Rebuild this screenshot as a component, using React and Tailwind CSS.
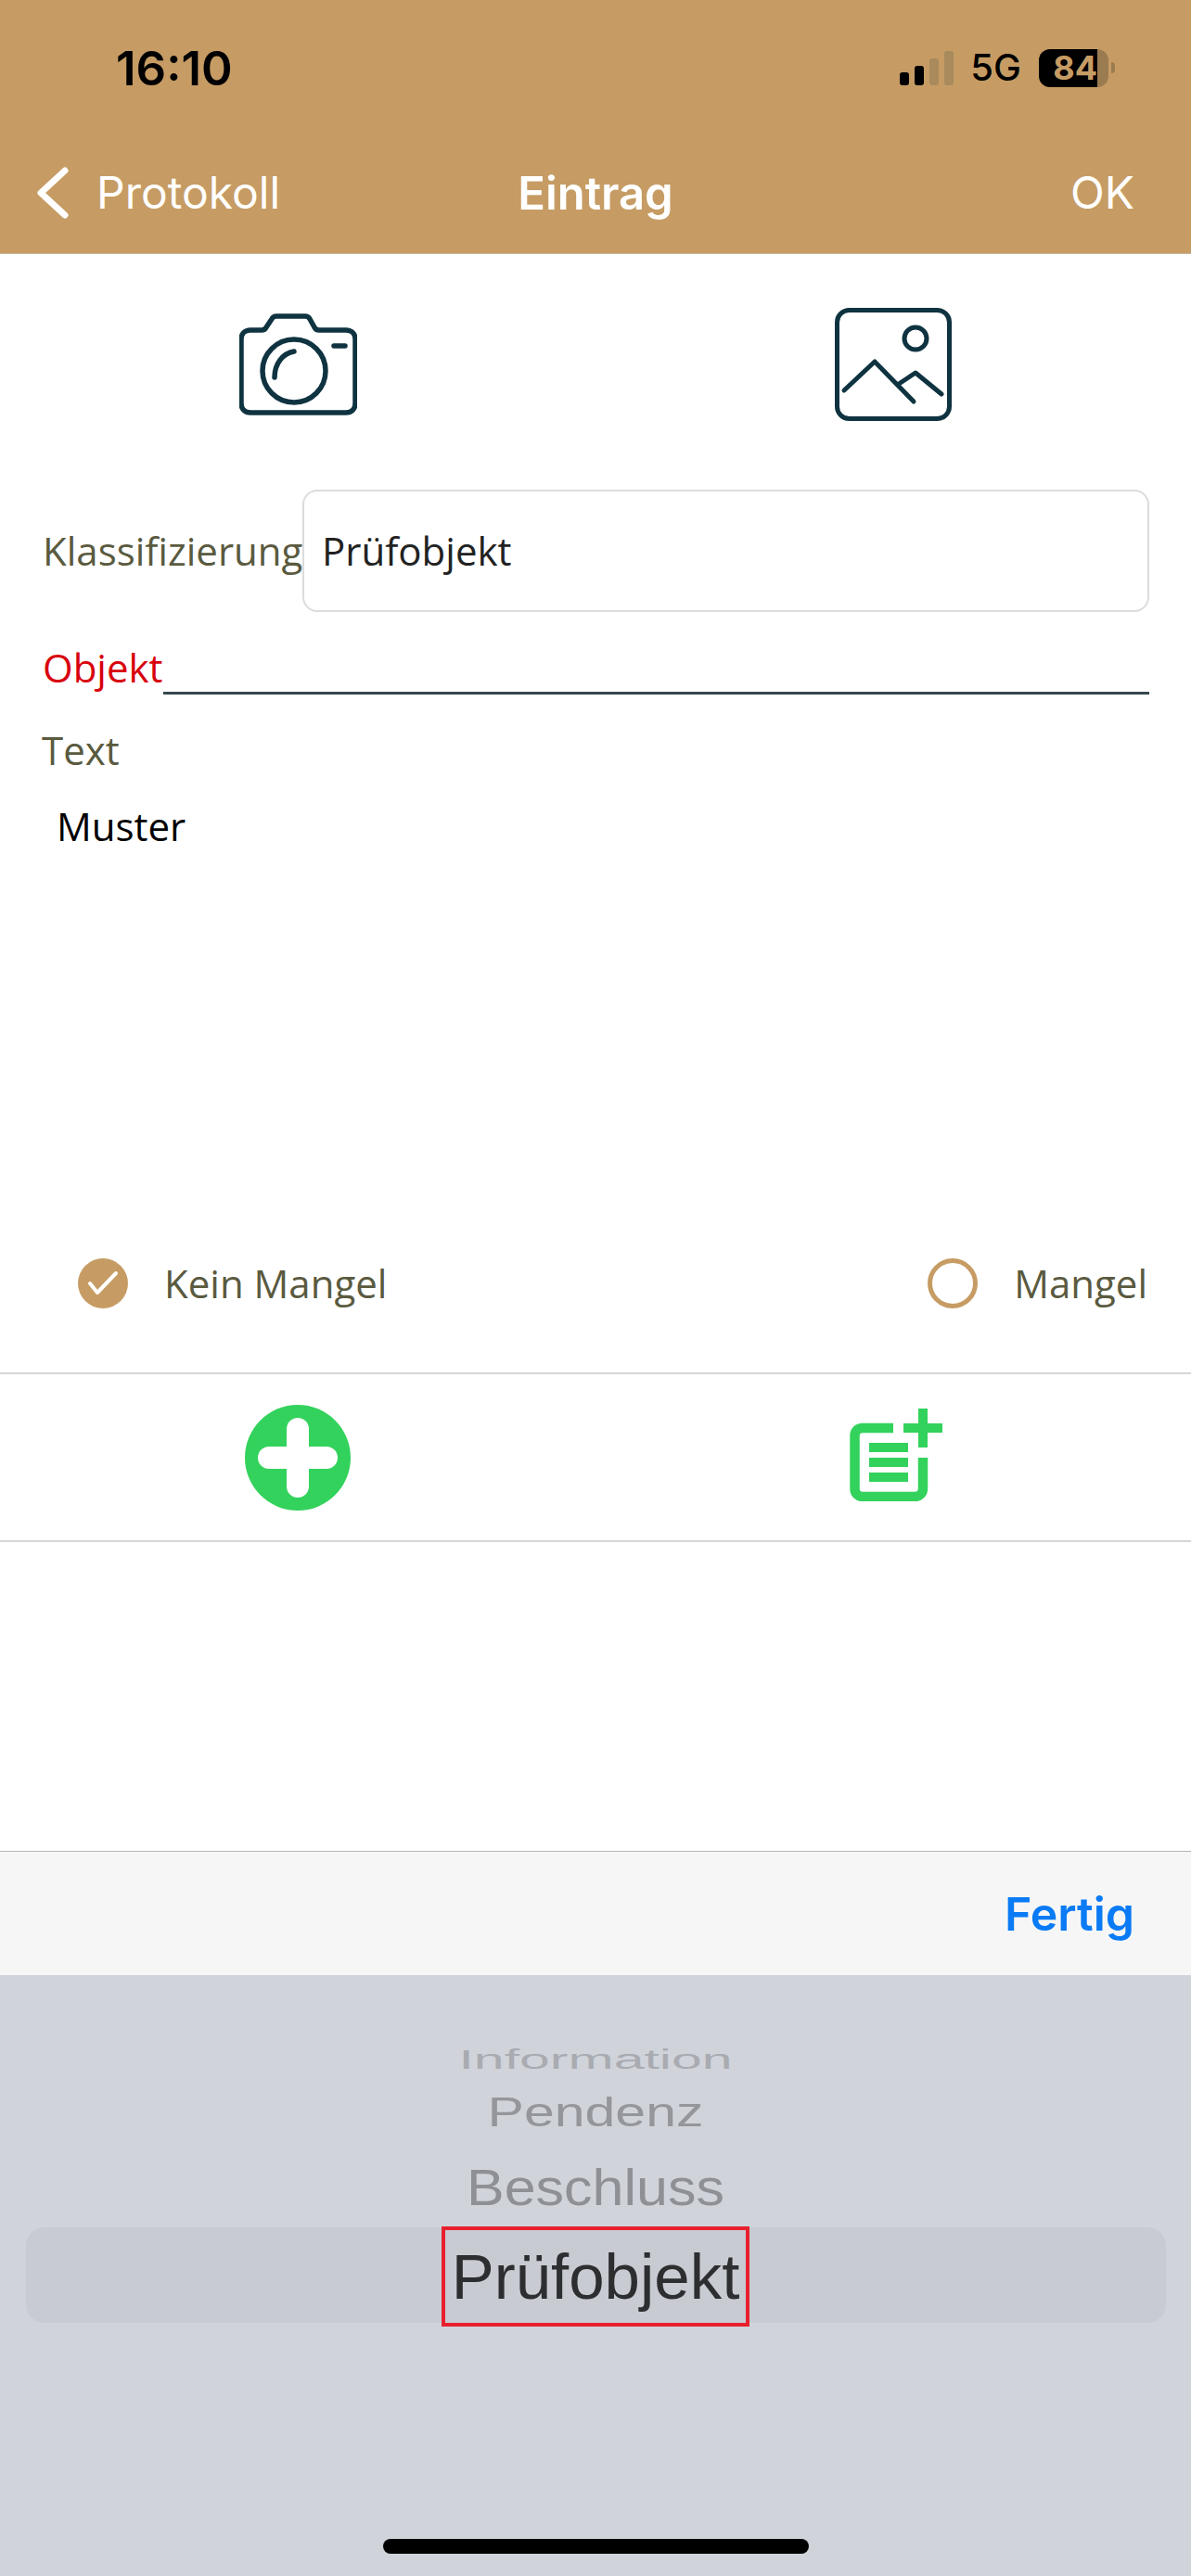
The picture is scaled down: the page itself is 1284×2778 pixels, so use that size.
import React from 'react';

const openSans = { fontFamily: '"Open Sans", sans-serif' };

function CameraIcon() {
  return (
    <svg className="w-[127px] h-[110px]" viewBox="258 338 127 110" fill="none" stroke="#0f3340" strokeWidth="5.5" strokeLinecap="round" strokeLinejoin="round">
      <path d="M270 356h12c3 0 4-1 5-3l6-9c1-2 3-3 5-3h31c2 0 4 1 5 3l5 9c1 2 3 3 5 3h29c6 0 10 4 10 10v69c0 6-4 10-10 10H270c-6 0-10-4-10-10v-69c0-6 4-10 10-10z" />
      <circle cx="317" cy="400" r="34" />
      <path d="M296 407c0-15 9-26 21-28" />
      <path d="M360 373h12" />
    </svg>
  );
}

function ImageIcon() {
  return (
    <svg className="w-[126px] h-[122px]" viewBox="901 332 126 122" fill="none" stroke="#0f3340" strokeWidth="5" strokeLinecap="round" strokeLinejoin="round">
      <rect x="903.500" y="334.500" width="121" height="117" rx="13" />
      <circle cx="988" cy="365" r="12" />
      <path d="M911 421l33-31 42 43" />
      <path d="M970 414l18-12 28 23" />
    </svg>
  );
}

function PlusCircle() {
  return (
    <svg className="w-[114px] h-[114px]" viewBox="0 0 114 114">
      <circle cx="57" cy="57" r="57" fill="#33d25c" />
      <rect x="45" y="14" width="24" height="86" rx="12" fill="#fff" />
      <rect x="14" y="45" width="86" height="24" rx="12" fill="#fff" />
    </svg>
  );
}

function NoteAddIcon() {
  return (
    <svg className="w-[100px] h-[100px]" viewBox="916 1518 100 100" fill="#33d25c">
      <path d="M963 1539h-33c-5 0-8.500 3-8.500 8.500v57c0 5 3.500 8.500 8.500 8.500h56c5 0 9-3.500 9-8.500v-33.500" fill="none" stroke="#33d25c" strokeWidth="10.500" />
      <rect x="937" y="1555" width="42" height="10" />
      <rect x="937" y="1571" width="42" height="10" />
      <rect x="937" y="1587" width="42" height="10" />
      <rect x="990" y="1518" width="10" height="42" />
      <rect x="974" y="1534" width="42" height="10" />
    </svg>
  );
}

function StatusBar() {
  return (
    <div className="flex items-center justify-between h-[46px] mt-[50px] pl-[125px] pr-[82px]">
      <span className="text-[51px] leading-none font-semibold text-black" style={{ fontFamily: 'Inter, sans-serif' }}>16:10</span>
      <div className="flex items-center">
        <div className="flex items-end gap-[6px] h-[37px] mt-[1px]">
          <div className="w-[10px] h-[14px] rounded-[3px] bg-black" />
          <div className="w-[10px] h-[21px] rounded-[3px] bg-black" />
          <div className="w-[10px] h-[29px] rounded-[3px] bg-[#a98a5c]" />
          <div className="w-[10px] h-[37px] rounded-[3px] bg-[#a98a5c]" />
        </div>
        <span className="ml-[18px] text-[40px] leading-none font-medium text-black" style={{ fontFamily: 'Inter, sans-serif' }}>5G</span>
        <div className="ml-[19px] flex items-center">
          <div className="w-[63px] h-[41px] rounded-l-[12px] bg-black flex items-center justify-end">
            <span className="text-[36px] leading-none font-bold text-[#c69c64]" style={{ fontFamily: 'Inter, sans-serif' }}>84</span>
          </div>
          <div className="w-[12px] h-[41px] rounded-r-[12px] bg-[#9a7c50]" />
          <div className="ml-[3px] w-[4px] h-[12px] rounded-r-full bg-[#9a7c50]" />
        </div>
      </div>
    </div>
  );
}

function NavBar() {
  return (
    <div className="grid grid-cols-[1fr_auto_1fr] items-center mt-[84px] h-[56px] pl-[39px] pr-[61px] text-white text-[48px] leading-none" style={{ fontFamily: 'Inter, sans-serif' }}>
      <div className="flex items-center">
        <svg className="w-[35px] h-[56px]" viewBox="0 0 35 56" fill="none" stroke="#fff" strokeWidth="7" strokeLinecap="round" strokeLinejoin="round">
          <path d="M31 4L5 28l26 24" />
        </svg>
        <span className="ml-[30px]">Protokoll</span>
      </div>
      <span className="ml-[22px] text-[49px] font-semibold">Eintrag</span>
      <span className="text-right">OK</span>
    </div>
  );
}

function Radio({ checked, label }) {
  return (
    <div className="flex items-center">
      {checked ? (
        <svg className="w-[54px] h-[54px]" viewBox="0 0 54 54">
          <circle cx="27" cy="27" r="27" fill="#c69c64" />
          <path d="M13 27l8 10 20-21" fill="none" stroke="#fff" strokeWidth="4" strokeLinecap="round" strokeLinejoin="round" />
        </svg>
      ) : (
        <div className="w-[54px] h-[54px] rounded-full border-[5px] border-[#c69c64]" />
      )}
      <span className="ml-[39px] text-[42px] leading-none text-[#5a5a3f]">{label}</span>
    </div>
  );
}

function Picker() {
  return (
    <div className="relative flex-1 flex flex-col items-center bg-[#d0d3da]" style={{ fontFamily: '"Liberation Sans", sans-serif' }}>
      <div className="absolute left-[28px] right-[27px] top-[272px] h-[103px] rounded-[20px] bg-[#c8cbd2]" />
      <div className="relative mt-[66px] h-[50px] flex items-center text-[59px] leading-none text-[#a9abb1] scale-y-[0.51]">Information</div>
      <div className="relative h-[64px] flex items-center text-[59px] leading-none text-[#94969b] scale-y-[0.76]">Pendenz</div>
      <div className="relative h-[91px] pt-[8px] flex items-center text-[61px] leading-none text-[#8e9095] scale-y-[0.9]">Beschluss</div>
      <div className="relative w-[332px] h-[108px] flex items-center justify-center border-[4px] border-[#e8202e] text-[69px] leading-none text-[#2d2e30]">Prüfobjekt</div>
      <div className="mt-auto mb-[24px] w-[459px] h-[16px] rounded-full bg-black" />
    </div>
  );
}

export default function App() {
  return (
    <div className="w-[1284px] h-[2778px] flex flex-col bg-white overflow-hidden">
      <header className="h-[274px] shrink-0 bg-[#c69c64] border-b border-[#c9b79c]">
        <StatusBar />
        <NavBar />
      </header>

      <div className="grid grid-cols-2 items-center mt-[58px] h-[122px]">
        <div className="flex justify-center"><CameraIcon /></div>
        <div className="flex justify-center"><ImageIcon /></div>
      </div>

      <div className="px-[45px]" style={openSans}>
        <div className="flex items-center mt-[74px]">
          <span className="w-[281px] pl-px text-[42px] leading-none text-[#5a5a3f] whitespace-nowrap">Klassifizierung</span>
          <div className="flex-1 h-[132px] flex items-center px-[19px] bg-white border-2 border-[#dcdcdc] rounded-[16px] text-[42px] leading-none text-[#222]">Prüfobjekt</div>
        </div>

        <div className="flex items-end mt-[28px] h-[61px]">
          <span className="pl-px text-[42px] leading-[58px] h-[58px] text-[#d8000c]">Objekt</span>
          <div className="flex-1 h-[3px] bg-[#37474f]" />
        </div>

        <div className="mt-[31px] text-[42px] leading-[58px] text-[#5a5a3f]">Text</div>
        <div className="mt-[24px] pl-[16px] text-[42px] leading-[58px] text-black">Muster</div>

        <div className="flex items-center justify-between mt-[437px] pl-[39px] pr-[2px]">
          <Radio checked label="Kein Mangel" />
          <Radio label="Mangel" />
        </div>
      </div>

      <div className="grid grid-cols-2 items-center mt-[69px] h-[183px] border-t-2 border-b-2 border-[#d6d6d6]" style={openSans}>
        <div className="flex justify-center"><PlusCircle /></div>
        <div className="flex justify-center pl-[6px] -mt-[6px]"><NoteAddIcon /></div>
      </div>

      <div className="flex-1" />

      <div className="h-[134px] shrink-0 flex items-center justify-end pr-[61px] bg-[#f6f6f6] border-t border-[#b5b5b5]">
        <span className="text-[50px] leading-none font-semibold text-[#0a7bf5]" style={{ fontFamily: 'Inter, sans-serif' }}>Fertig</span>
      </div>

      <div className="h-[648px] shrink-0 flex flex-col">
        <Picker />
      </div>
    </div>
  );
}
